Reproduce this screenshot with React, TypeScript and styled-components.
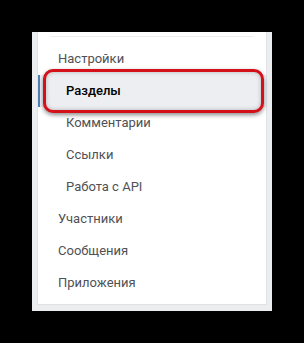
import React from "react";
import styled, { createGlobalStyle } from "styled-components";

const GlobalStyle = createGlobalStyle`
  html, body {
    margin: 0;
    padding: 0;
    background: #000;
  }
  body {
    font-family: Roboto, "Liberation Sans", Arial, sans-serif;
  }
`;

const Page = styled.div`
  width: 304px;
  height: 343px;
  padding: 32px 0 0 32px;
  box-sizing: border-box;
`;

const Frame = styled.div`
  width: 240px;
  height: 279px;
  box-sizing: border-box;
  background: #ecedef;
  padding: 0 5px 6px 5px;
  display: flex;
`;

const Card = styled.nav`
  flex: 1;
  background: #fff;
  border: 1px solid #e0e2e6;
  border-top: none;
  display: flex;
  flex-direction: column;
  padding: 4px 0 6px 0;
`;

const Separator = styled.div`
  height: 1px;
  background: #eceef1;
  margin: 0 12px 6px 12px;
`;

const Item = styled.div<{ $sub?: boolean; $active?: boolean }>`
  position: relative;
  height: 32px;
  display: flex;
  align-items: center;
  padding-left: ${(p) => (p.$sub ? "28px" : "20px")};
  font-size: 13px;
  color: ${(p) => (p.$active ? "#000" : "#505154")};
  font-weight: ${(p) => (p.$active ? 500 : 400)};
  background: ${(p) => (p.$active ? "#f0f2f5" : "transparent")};
  border-left: 2px solid ${(p) => (p.$active ? "#5181b8" : "transparent")};
  span {
    position: relative;
    z-index: 2;
    margin-left: -2px;
  }
`;

const Highlight = styled.div`
  position: absolute;
  left: 3px;
  top: -6px;
  width: 221px;
  height: 44px;
  box-sizing: border-box;
  border: 3px solid #d4101b;
  border-radius: 10px;
  background: #edeef1;
  box-shadow: 0 2px 4px rgba(0, 0, 0, 0.45), inset 0 0 4px rgba(0, 0, 0, 0.25);
  z-index: 1;
`;

const items: { label: string; sub?: boolean; active?: boolean }[] = [
  { label: "Настройки" },
  { label: "Разделы", sub: true, active: true },
  { label: "Комментарии", sub: true },
  { label: "Ссылки", sub: true },
  { label: "Работа с API", sub: true },
  { label: "Участники" },
  { label: "Сообщения" },
  { label: "Приложения" },
];

export default function App() {
  return (
    <Page>
      <GlobalStyle />
      <Frame>
        <Card>
          <Separator />
          {items.map((it) => (
            <Item key={it.label} $sub={it.sub} $active={it.active}>
              {it.active && <Highlight />}
              <span>{it.label}</span>
            </Item>
          ))}
        </Card>
      </Frame>
    </Page>
  );
}
